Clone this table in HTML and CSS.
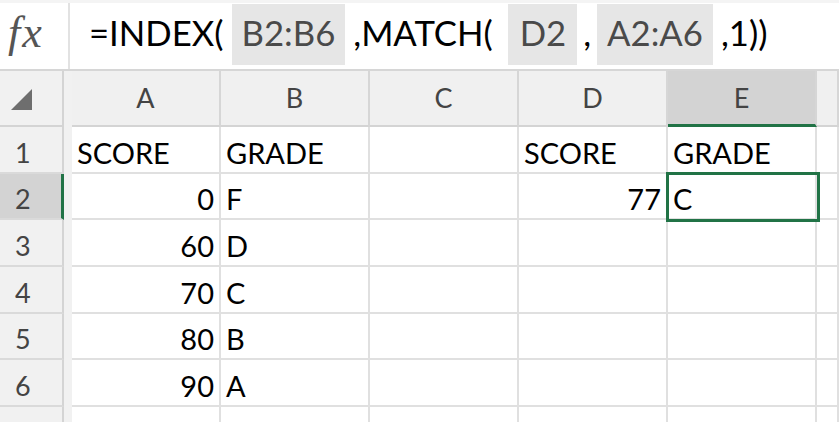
FILE: index.html
```html
<!DOCTYPE html>
<html>
<head>
<meta charset="utf-8">
<link rel="stylesheet" href="styles.css">
</head>
<body>
<div class="sheet">
  <div class="fbar">
    <div class="fx">fx</div>
    <div class="formula">
      <span class="tok">=INDEX(</span><span class="ref ref-b">B2:B6</span><span class="tok">,MATCH(</span><span class="ref ref-d">D2</span><span class="tok">,</span><span class="ref ref-a">A2:A6</span><span class="tok">,1))</span>
    </div>
  </div>
  <div class="grid">
    <div class="rowheads">
      <div class="corner">
        <svg width="24" height="24" viewBox="0 0 24 24"><polygon points="22,1 22,22 1,22" fill="#6e6e6e"/></svg>
      </div>
      <div class="rh">1</div>
      <div class="rh sel">2</div>
      <div class="rh">3</div>
      <div class="rh">4</div>
      <div class="rh">5</div>
      <div class="rh">6</div>
      <div class="rh"></div>
    </div>
    <div class="band"></div>
    <div class="cells">
      <div class="row head">
        <div class="c">A</div><div class="c">B</div><div class="c">C</div><div class="c">D</div><div class="c selcol">E</div><div class="c last"></div>
      </div>
      <div class="row">
        <div class="c">SCORE</div><div class="c">GRADE</div><div class="c"></div><div class="c">SCORE</div><div class="c">GRADE</div><div class="c last"></div>
      </div>
      <div class="row">
        <div class="c num">0</div><div class="c">F</div><div class="c"></div><div class="c num">77</div><div class="c">C</div><div class="c last"></div>
      </div>
      <div class="row">
        <div class="c num">60</div><div class="c">D</div><div class="c"></div><div class="c"></div><div class="c"></div><div class="c last"></div>
      </div>
      <div class="row">
        <div class="c num">70</div><div class="c">C</div><div class="c"></div><div class="c"></div><div class="c"></div><div class="c last"></div>
      </div>
      <div class="row">
        <div class="c num">80</div><div class="c">B</div><div class="c"></div><div class="c"></div><div class="c"></div><div class="c last"></div>
      </div>
      <div class="row">
        <div class="c num">90</div><div class="c">A</div><div class="c"></div><div class="c"></div><div class="c"></div><div class="c last"></div>
      </div>
      <div class="row">
        <div class="c"></div><div class="c"></div><div class="c"></div><div class="c"></div><div class="c"></div><div class="c last"></div>
      </div>
    </div>
  </div>
  <div class="active"></div>
</div>
</body>
</html>
```

FILE: styles.css
```css
* { box-sizing: border-box; }
html, body { margin: 0; padding: 0; background: #fff; }
body { width: 839px; height: 422px; overflow: hidden; font-family: Lato, "Open Sans", sans-serif; }
.sheet { position: relative; width: 839px; height: 422px; overflow: hidden; }

.fbar {
  display: flex;
  height: 71px;
  border-top: 3px solid #f4f4f4;
  border-bottom: 2px solid #d6d6d6;
}
.fx {
  width: 70px;
  border-right: 2px solid #e2e2e2;
  font-family: "Liberation Serif", "DejaVu Serif", serif;
  font-style: italic;
  font-size: 44px;
  color: #555;
  padding-left: 8px;
  line-height: 60px;
  letter-spacing: 2px;
}
.formula {
  display: flex;
  align-items: stretch;
  padding-left: 19px;
  padding-top: 1px;
  padding-bottom: 4px;
  font-size: 34.7px;
  color: #000;
}
.tok { line-height: 58px; white-space: pre; }
.ref {
  background: #e6e6e6;
  color: #4a4a4a;
  line-height: 58px;
  padding: 0 10px;
  margin: 0 8px;
}
.ref-d { padding: 0 11px 0 12px; margin: 0 6px 0 15px; }
.ref-a { margin-left: 6px; }

.grid { display: flex; height: 351px; }
.rowheads { width: 64px; background: #f1f1f1; }
.corner {
  height: 56px;
  border-right: 2px solid #d4d4d4;
  border-bottom: 2px solid #d4d4d4;
  padding: 17px 0 0 10px;
}
.corner svg { display: block; }
.rh {
  height: calc(140px / 3);
  border-right: 2px solid #d4d4d4;
  border-bottom: 2px solid #dadada;
  font-size: 27px;
  color: #444;
  padding-left: 15px;
  display: flex;
  align-items: flex-end;
  line-height: 36px;
  padding-bottom: 1px;
}
.rh.sel { background: #d3d3d3; border-right: 3px solid #217346; }
.band { width: 8px; background: #f1f1f1; }

.cells { flex: 1; }
.row { display: flex; height: calc(140px / 3); }
.c {
  width: 149px;
  flex: none;
  border-right: 2px solid #e0e0e0;
  border-bottom: 2px solid #e0e0e0;
  font-size: 29px;
  color: #000;
  display: flex;
  align-items: flex-end;
  line-height: 36px;
  padding: 0 5px 1px 5px;
}
.c.last { flex: 1; width: auto; }
.c.num { justify-content: flex-end; }
.row.head { height: 56px; background: #f0f0f0; }
.row.head .c {
  border-right-color: #d6d6d6;
  border-bottom-color: #d4d4d4;
  font-size: 27px;
  color: #444;
  justify-content: center;
  align-items: center;
  padding: 0;
}
.row.head .c.selcol { background: #d3d3d3; border-bottom: 3px solid #217346; }

.active {
  position: absolute;
  left: 666px;
  top: 172px;
  width: 154px;
  height: 50px;
  border: 3px solid #217346;
}
```
